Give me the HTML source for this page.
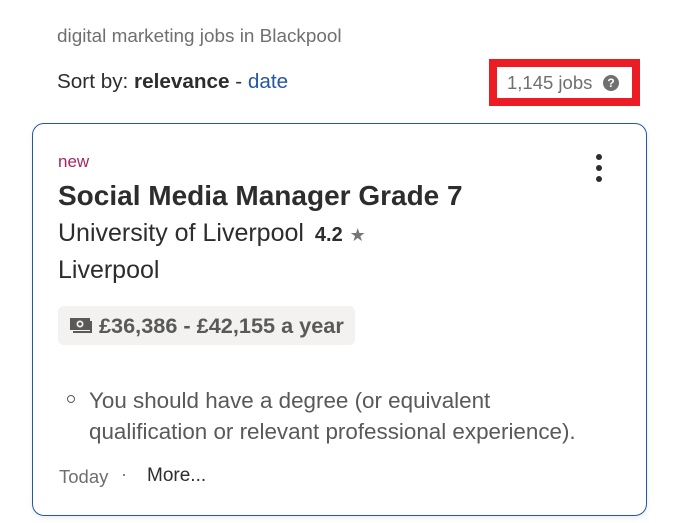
<!DOCTYPE html>
<html><head><meta charset="utf-8"><style>
body{margin:0;width:682px;height:523px;background:#fff;font-family:"Liberation Sans",sans-serif;position:relative;overflow:hidden;color:#2d2d2d}
.a{position:absolute;white-space:nowrap}
</style></head><body>
<div class="a" style="left:57px;top:26px;font-size:18.9px;color:#6f6f6f">digital marketing jobs in Blackpool</div>
<div class="a" style="left:57px;top:70px;font-size:20.7px;color:#2d2d2d">Sort by: <b>relevance</b> - <span style="color:#2557a7">date</span></div>
<div class="a" style="left:489px;top:59px;width:135px;height:31px;border:8px solid #ec1c24"></div>
<div class="a" style="left:507px;top:72px;font-size:18.5px;color:#6f6f6f">1,145 jobs</div>
<div class="a" style="left:603px;top:75px;width:16px;height:16px;border-radius:50%;background:#707070;color:#fff;font-size:12px;font-weight:bold;text-align:center;line-height:16px">?</div>
<div class="a" style="left:32px;top:123px;width:613px;height:391px;border:1px solid #2557a7;border-radius:12px;box-shadow:0 2px 6px rgba(0,0,0,.08)"></div>
<div class="a" style="left:596px;top:154px;width:6px;height:6px;border-radius:50%;background:#2d2d2d"></div>
<div class="a" style="left:596px;top:165px;width:6px;height:6px;border-radius:50%;background:#2d2d2d"></div>
<div class="a" style="left:596px;top:176px;width:6px;height:6px;border-radius:50%;background:#2d2d2d"></div>
<div class="a" style="left:58px;top:152px;font-size:17px;color:#a9255f">new</div>
<div class="a" style="left:58px;top:180px;font-size:28px;font-weight:bold;color:#2d2d2d">Social Media Manager Grade 7</div>
<div class="a" style="left:58px;top:219px;font-size:25px;color:#2d2d2d">University of Liverpool <b style="font-size:20px;margin-left:4px">4.2</b> <span style="color:#767676;font-size:18px">★</span></div>
<div class="a" style="left:58px;top:256px;font-size:25px;color:#2d2d2d">Liverpool</div>
<div class="a" style="left:58px;top:306px;width:297px;height:39px;background:#f3f2f1;border-radius:6px"></div>
<svg class="a" style="left:69px;top:317px" width="26" height="18" viewBox="0 0 26 18"><rect x="1" y="1" width="20" height="12" fill="#595959"/><circle cx="11" cy="7" r="3.5" fill="#f3f2f1"/><circle cx="11" cy="7" r="1.8" fill="#595959"/><path d="M22 4v11H4" stroke="#595959" stroke-width="2" fill="none"/></svg>
<div class="a" style="left:99px;top:313px;font-size:21.7px;font-weight:bold;color:#595959">£36,386 - £42,155 a year</div>
<div class="a" style="left:67px;top:395px;width:6px;height:6px;border:1.5px solid #595959;border-radius:50%"></div>
<div class="a" style="left:89px;top:385px;font-size:22.4px;line-height:31px;color:#595959">You should have a degree (or equivalent<br>qualification or relevant professional experience).</div>
<div class="a" style="left:59px;top:466px;font-size:18.5px;color:#6f6f6f">Today</div>
<div class="a" style="left:121px;top:464px;font-size:18px;color:#6f6f6f">·</div>
<div class="a" style="left:147px;top:465px;font-size:19px;color:#2d2d2d">More...</div>
</body></html>
